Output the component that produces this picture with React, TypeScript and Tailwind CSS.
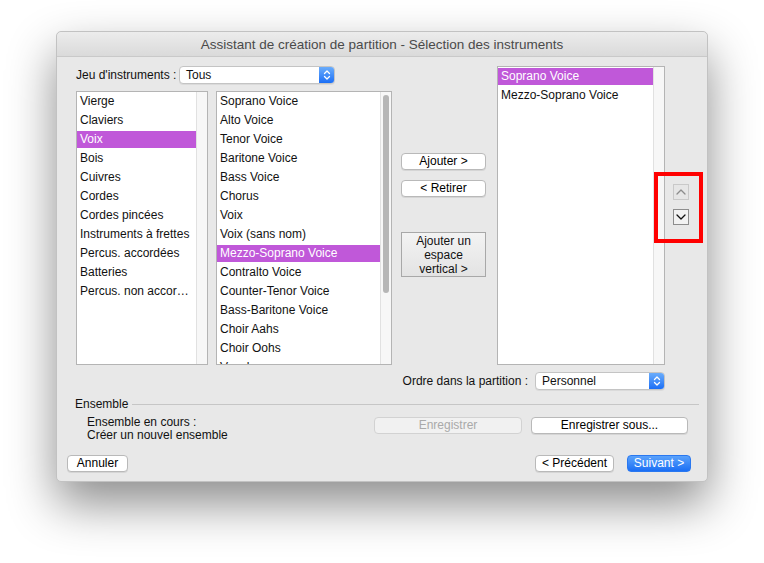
import type { ReactNode } from 'react';
import clsx from 'clsx';

const families = ['Vierge', 'Claviers', 'Voix', 'Bois', 'Cuivres', 'Cordes', 'Cordes pincées', 'Instruments à frettes', 'Percus. accordées', 'Batteries', 'Percus. non accor…'];

const voices = [
  'Soprano Voice',
  'Alto Voice',
  'Tenor Voice',
  'Baritone Voice',
  'Bass Voice',
  'Chorus',
  'Voix',
  'Voix (sans nom)',
  'Mezzo-Soprano Voice',
  'Contralto Voice',
  'Counter-Tenor Voice',
  'Bass-Baritone Voice',
  'Choir Aahs',
  'Choir Oohs',
  'Vocals',
];

const score = ['Soprano Voice', 'Mezzo-Soprano Voice'];

function ListBox({ items, selected, className, thumb }: { items: string[]; selected: string; className: string; thumb?: boolean }) {
  return (
    <div className={clsx('flex overflow-hidden border border-[#b4b4b4] bg-white', className)}>
      <div className="flex-1 overflow-hidden">
        {items.map((item) => (
          <div key={item} className="h-[19px] py-px">
            <div
              className={clsx(
                'h-[17px] whitespace-nowrap pl-[3px] leading-[17px]',
                item === selected ? 'bg-[#c058d9] text-white' : 'text-[#111]'
              )}
            >
              {item}
            </div>
          </div>
        ))}
      </div>
      {/* scroll track */}
      <div className="w-[11px] border-l border-[#e1e1e1] bg-[#f7f7f7] pt-[3px]">
        {thumb && <div className="mx-auto h-[198px] w-[6px] rounded-full bg-[#b6b6b6]" />}
      </div>
    </div>
  );
}

function Select({ value, className }: { value: string; className: string }) {
  return (
    <div className={clsx('flex h-[18px] overflow-hidden rounded-[4px] border border-[#c4c4c4] bg-white shadow-[0_1px_0_rgba(0,0,0,0.06)]', className)}>
      <span className="flex-1 pl-[6px] leading-[16px]">{value}</span>
      <span className="flex w-[15px] items-center justify-center bg-linear-to-b from-[#6aacfb] to-[#1a6ef5]">
        <svg width="8" height="12" viewBox="0 0 8 12" fill="none" stroke="white" strokeWidth="1.3" strokeLinecap="round" strokeLinejoin="round">
          <path d="M1.5 4.5 L4 2 L6.5 4.5" />
          <path d="M1.5 7.5 L4 10 L6.5 7.5" />
        </svg>
      </span>
    </div>
  );
}

function Btn({ children, className, disabled, primary }: { children: ReactNode; className: string; disabled?: boolean; primary?: boolean }) {
  return (
    <button
      className={clsx(
        'h-[17px] rounded-[4px] border text-center leading-[15px]',
        primary
          ? 'border-[#2a78f0] bg-linear-to-b from-[#5aa2fb] to-[#1a6ef4] text-white'
          : disabled
            ? 'border-[#d2d2d2] bg-[#f1f1f1] text-[#a9a9a9]'
            : 'border-[#b9b9b9] bg-white text-black shadow-[0_1px_0_rgba(0,0,0,0.08)]',
        className
      )}
    >
      {children}
    </button>
  );
}

function Chevron({ up, color }: { up?: boolean; color: string }) {
  return (
    <svg width="10" height="6" viewBox="0 0 10 6" fill="none" stroke={color} strokeWidth="1.3" strokeLinecap="round" strokeLinejoin="round">
      <path d={up ? 'M1 5 L5 1 L9 5' : 'M1 1 L5 5 L9 1'} />
    </svg>
  );
}

export default function App() {
  return (
    <div className="min-h-[563px] bg-white pt-[31px] pl-[56px] font-['Liberation_Sans',Arial,sans-serif] text-[12px] text-[#111]">
      <div className="relative h-[451px] w-[652px] rounded-[5px] border border-[#c2c2c2] bg-[#e8e8e8] shadow-[0_22px_48px_rgba(0,0,0,0.45)]">
        {/* title bar */}
        <div className="h-[25px] rounded-t-[5px] border-b border-[#c9c9c9] bg-linear-to-b from-[#ececec] to-[#dadada] text-center text-[13.5px] leading-[25px] text-[#4a4a4a]">
          Assistant de création de partition - Sélection des instruments
        </div>

        {/* main row */}
        <div className="flex items-start pt-[9px] pl-[19px]">
          <div className="flex flex-col">
            <div className="flex h-[18px] items-center">
              <span className="w-[103px] whitespace-nowrap">Jeu d'instruments :</span>
              <Select value="Tous" className="w-[156px]" />
            </div>
            <div className="mt-[7px] flex gap-[8px]">
              <ListBox items={families} selected="Voix" className="h-[274px] w-[132px]" />
              <ListBox items={voices} selected="Mezzo-Soprano Voice" className="h-[274px] w-[176px]" thumb />
            </div>
          </div>

          <div className="ml-[9px] flex w-[85px] flex-col pt-[87px]">
            <Btn className="w-[85px]">Ajouter &gt;</Btn>
            <Btn className="mt-[10px] w-[85px]">&lt; Retirer</Btn>
            <button className="mt-[35px] h-[45px] w-[85px] border border-[#a8a8a8] bg-linear-to-b from-[#f3f3f3] to-[#e3e3e3] text-center leading-[14px]">
              Ajouter un
              <br />
              espace
              <br />
              vertical &gt;
            </button>
          </div>

          <ListBox items={score} selected="Soprano Voice" className="ml-[11px] h-[299px] w-[168px]" />

          <div className="ml-[8px] flex flex-col gap-[9px] pt-[118px]">
            <div className="flex h-[16px] w-[16px] items-center justify-center border border-[#c9c9c9] bg-[#e6e6e6]">
              <Chevron up color="#8c8c8c" />
            </div>
            <div className="flex h-[16px] w-[16px] items-center justify-center border border-[#8d8d8d] bg-[#f2f2f2]">
              <Chevron color="#111" />
            </div>
          </div>
        </div>

        {/* red annotation box */}
        <div className="absolute top-[140px] left-[597px] h-[71px] w-[49px] border-4 border-[#ff0000]" />

        {/* score order */}
        <div className="mt-[7px] flex h-[18px] items-center justify-end gap-[7px] pr-[42px]">
          <span>Ordre dans la partition :</span>
          <Select value="Personnel" className="w-[130px]" />
        </div>

        {/* ensemble */}
        <div className="mt-[7px] flex h-[14px] items-center pr-[8px] pl-[18px]">
          <span>Ensemble</span>
          <div className="ml-[4px] h-px flex-1 bg-[#c6c6c6]" />
        </div>
        <div className="mt-[5px] flex items-start pl-[30px]">
          <div className="w-[287px] leading-[13px]">
            <div>Ensemble en cours :</div>
            <div>Créer un nouvel ensemble</div>
          </div>
          <div className="mt-px flex gap-[9px]">
            <Btn disabled className="w-[148px]">Enregistrer</Btn>
            <Btn className="w-[157px]">Enregistrer sous...</Btn>
          </div>
        </div>

        {/* footer */}
        <div className="mt-[13px] flex items-center pr-[16px] pl-[10px]">
          <Btn className="w-[61px]">Annuler</Btn>
          <Btn className="ml-auto w-[79px]">&lt; Précédent</Btn>
          <Btn primary className="ml-[13px] w-[64px]">Suivant &gt;</Btn>
        </div>
      </div>
    </div>
  );
}
